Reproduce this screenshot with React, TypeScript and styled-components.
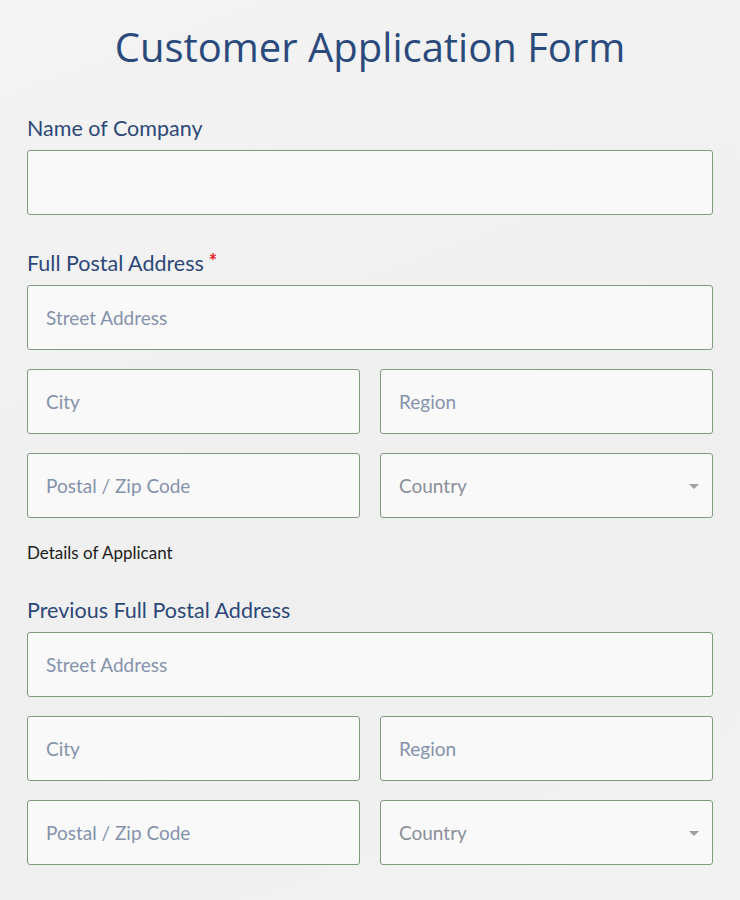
import React from "react"
import styled, { createGlobalStyle } from "styled-components"

const GlobalStyle = createGlobalStyle`
  html, body {
    margin: 0;
    padding: 0;
    background: #f1f1f1;
  }
  * {
    box-sizing: border-box;
  }
`

const Page = styled.div`
  min-height: 900px;
  padding: 22px 27px 30px;
  background: linear-gradient(160deg, #f3f3f3 0%, #efefef 60%, #f2f2f2 100%);
  font-family: "Lato", "Liberation Sans", sans-serif;
`

const Title = styled.h1`
  margin: 0 0 44px;
  text-align: center;
  font-family: "Open Sans", "Liberation Sans", sans-serif;
  font-weight: 400;
  font-size: 40px;
  line-height: 50px;
  color: #2b4a7c;
`

const Group = styled.section<{ $gap?: number }>`
  margin-bottom: ${(p) => p.$gap ?? 36}px;
`

const Label = styled.div`
  font-size: 21.5px;
  line-height: 24px;
  height: 24px;
  color: #2d4878;
  margin-bottom: 10px;
`

const Required = styled.span`
  color: #e0222b;
  font-size: 20px;
  font-weight: 700;
  line-height: 0;
  margin-left: 5px;
  vertical-align: 2px;
`

const Note = styled.div`
  font-size: 17px;
  line-height: 20px;
  color: #1c1c1c;
  margin-bottom: 35px;
`

const Rows = styled.div`
  display: grid;
  grid-template-columns: 1fr 1fr;
  gap: 19px 20px;
`

const fieldCss = `
  width: 100%;
  height: 65px;
  padding: 0 18px;
  border: 1px solid #7f9a7c;
  border-radius: 3px;
  background: #f9f9f9;
  font-family: "Lato", "Liberation Sans", sans-serif;
  font-size: 19px;
  color: #3a4a66;
  outline: none;
`

const Input = styled.input<{ $wide?: boolean }>`
  ${fieldCss}
  grid-column: ${(p) => (p.$wide ? "1 / -1" : "auto")};
  &::placeholder {
    color: #8592ab;
  }
`

const SelectWrap = styled.div`
  position: relative;

  &::after {
    content: "";
    position: absolute;
    right: 14px;
    top: 31px;
    border-left: 5px solid transparent;
    border-right: 5px solid transparent;
    border-top: 5px solid #a0a0a0;
    pointer-events: none;
  }
`

const Select = styled.select`
  ${fieldCss}
  appearance: none;
  -webkit-appearance: none;
  color: #8a8f99;
`

const AddressFields = () => (
  <Rows>
    <Input $wide placeholder="Street Address" />
    <Input placeholder="City" />
    <Input placeholder="Region" />
    <Input placeholder="Postal / Zip Code" />
    <SelectWrap>
      <Select defaultValue="">
        <option value="" disabled>
          Country
        </option>
        <option>New Zealand</option>
        <option>Australia</option>
      </Select>
    </SelectWrap>
  </Rows>
)

export default function App() {
  return (
    <>
      <GlobalStyle />
      <Page>
        <Title>Customer Application Form</Title>
        <Group>
          <Label>Name of Company</Label>
          <Rows>
            <Input $wide />
          </Rows>
        </Group>
        <Group $gap={25}>
          <Label>
            Full Postal Address<Required>*</Required>
          </Label>
          <AddressFields />
        </Group>
        <Note>Details of Applicant</Note>
        <Group>
          <Label>Previous Full Postal Address</Label>
          <AddressFields />
        </Group>
      </Page>
    </>
  )
}
